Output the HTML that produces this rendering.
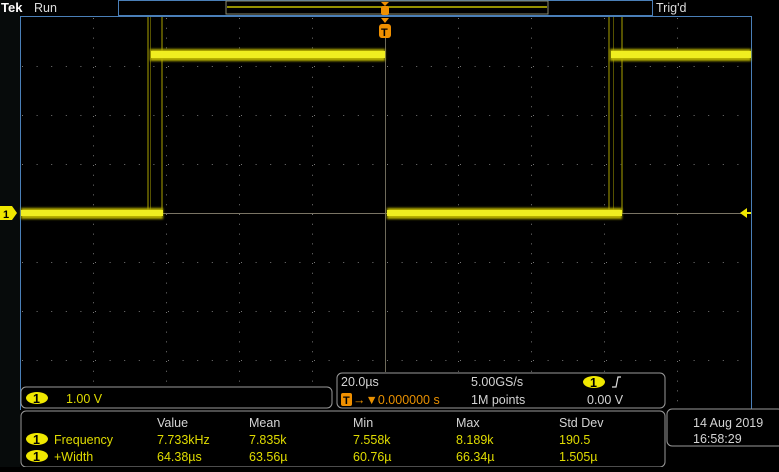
<!DOCTYPE html>
<html><head><meta charset="utf-8"><style>
body{margin:0;background:#000;width:779px;height:467px;overflow:hidden;font-family:"Liberation Sans",sans-serif}
svg text{font-family:"Liberation Sans",sans-serif;font-size:12.5px}
</style></head><body>
<svg width="779" height="467" xmlns="http://www.w3.org/2000/svg">
<defs>
<filter id="bl"><feGaussianBlur stdDeviation="1"/></filter>
</defs>
<rect width="779" height="467" fill="#000"/>
<rect x="0" y="0" width="20" height="467" fill="#070b0b"/>
<text x="1" y="12" fill="#fff" font-weight="bold" style="font-size:13px">Tek</text>
<text x="34" y="12" fill="#ddd">Run</text>
<rect x="118.5" y="0.5" width="534" height="15" fill="none" stroke="#4a7fb8"/>
<rect x="226" y="1" width="322" height="13" fill="none" stroke="#8a8a70" stroke-width="1"/>
<line x1="227" y1="7" x2="547" y2="7" stroke="#c8c000" stroke-width="1.5"/>
<text x="656" y="12" fill="#ddd">Trig'd</text>
<line x1="20.5" y1="16.5" x2="751" y2="16.5" stroke="#4a7fb8"/>
<line x1="20.5" y1="16" x2="20.5" y2="410" stroke="#4a7fb8"/>
<line x1="751.5" y1="16" x2="751.5" y2="410" stroke="#4a7fb8"/>
<g stroke="#777" stroke-width="1" stroke-dasharray="1,8.8">
<line x1="93.5" y1="18" x2="93.5" y2="410"/><line x1="166.5" y1="18" x2="166.5" y2="410"/><line x1="239.5" y1="18" x2="239.5" y2="410"/><line x1="312.5" y1="18" x2="312.5" y2="410"/>
<line x1="458.5" y1="18" x2="458.5" y2="410"/><line x1="531.5" y1="18" x2="531.5" y2="410"/><line x1="604.5" y1="18" x2="604.5" y2="410"/><line x1="677.5" y1="18" x2="677.5" y2="410"/>
<line x1="22" y1="66.5" x2="750" y2="66.5" stroke-dasharray="1,13.6"/><line x1="22" y1="115.5" x2="750" y2="115.5" stroke-dasharray="1,13.6"/><line x1="22" y1="164.5" x2="750" y2="164.5" stroke-dasharray="1,13.6"/>
<line x1="22" y1="262.5" x2="750" y2="262.5" stroke-dasharray="1,13.6"/><line x1="22" y1="311.5" x2="750" y2="311.5" stroke-dasharray="1,13.6"/><line x1="22" y1="360.5" x2="750" y2="360.5" stroke-dasharray="1,13.6"/>
</g>
<line x1="21" y1="213.5" x2="750" y2="213.5" stroke="#7a7464"/>
<line x1="385.5" y1="38" x2="385.5" y2="372" stroke="#6e6a5a"/>
<g fill="#7a7400" opacity="0.7">
<rect x="147" y="17" width="2" height="196"/><rect x="150" y="17" width="1" height="196"/><rect x="161" y="17" width="2" height="196"/>
<rect x="608" y="17" width="2" height="196"/><rect x="613" y="17" width="1" height="196"/><rect x="621" y="17" width="2" height="196"/>
</g>
<g filter="url(#bl)" fill="#b8b000">
<rect x="21" y="208" width="142" height="11"/><rect x="150" y="49" width="235" height="12"/>
<rect x="387" y="208" width="235" height="11"/><rect x="610" y="49" width="141" height="12"/>
</g>
<g fill="#f0ee20">
<rect x="21" y="210" width="142" height="6"/><rect x="151" y="51" width="234" height="7"/>
<rect x="387" y="210" width="235" height="6"/><rect x="611" y="51" width="140" height="7"/>
</g>
<path d="M0 206 H12 L17 213 L12 220 H0 Z" fill="#f0e800"/>
<text x="3" y="218" fill="#000" font-weight="bold" style="font-size:11px">1</text>
<path d="M740 213 L747 208 V218 Z" fill="#f0e800"/><rect x="745" y="212" width="6" height="2" fill="#f0e800"/>
<path d="M381 2 H389 L385 6 Z" fill="#f09000"/>
<rect x="381" y="6" width="8" height="9" rx="2" fill="#f09000"/>
<path d="M381 18 H389 L385 23 Z" fill="#f09000"/>
<rect x="379" y="24" width="12" height="14" rx="3" fill="#f09000"/>
<text x="381" y="36" fill="#000" font-weight="bold" style="font-size:11px">T</text>
<rect x="21" y="387" width="311" height="21" rx="5" fill="#000" stroke="#9a9a9a"/>
<rect x="337" y="373" width="328" height="35" rx="5" fill="#000" stroke="#9a9a9a"/>
<rect x="21" y="411" width="644" height="56" rx="5" fill="#000" stroke="#9a9a9a"/>
<rect x="667" y="409" width="116" height="37" rx="5" fill="#000" stroke="#9a9a9a"/>
<g fill="#f0e800">
<ellipse cx="37" cy="398" rx="11" ry="6"/><ellipse cx="37" cy="439" rx="11" ry="6"/><ellipse cx="37" cy="456" rx="11" ry="6"/><ellipse cx="594" cy="382" rx="11" ry="6"/>
</g>
<g fill="#000" font-weight="bold"><text x="33" y="403">1</text><text x="33" y="444">1</text><text x="33" y="461">1</text><text x="590" y="387">1</text></g>
<g fill="#e0dc00">
<text x="66" y="403">1.00 V</text>
<text x="54" y="444">Frequency</text><text x="54" y="461">+Width</text>
<text x="157" y="444">7.733kHz</text><text x="249" y="444">7.835k</text><text x="353" y="444">7.558k</text><text x="456" y="444">8.189k</text><text x="559" y="444">190.5</text>
<text x="157" y="461">64.38µs</text><text x="249" y="461">63.56µ</text><text x="353" y="461">60.76µ</text><text x="456" y="461">66.34µ</text><text x="559" y="461">1.505µ</text>
</g>
<g fill="#d4d4d4">
<text x="341" y="386">20.0µs</text><text x="471" y="386">5.00GS/s</text><text x="471" y="404">1M points</text><text x="587" y="404">0.00 V</text>
<text x="157" y="427">Value</text><text x="249" y="427">Mean</text><text x="353" y="427">Min</text><text x="456" y="427">Max</text><text x="559" y="427">Std Dev</text>
<text x="693" y="427">14 Aug 2019</text><text x="693" y="443">16:58:29</text>
</g>
<path d="M612 387 L616 387 L618 377 L621 377" fill="none" stroke="#ddd" stroke-width="1.2"/>
<rect x="341" y="393" width="11" height="13" rx="2" fill="#f09000"/>
<text x="343" y="404" fill="#000" font-weight="bold" style="font-size:11px">T</text>
<text x="353" y="404" fill="#e89000">→▼0.000000 s</text>
</svg>
</body></html>
